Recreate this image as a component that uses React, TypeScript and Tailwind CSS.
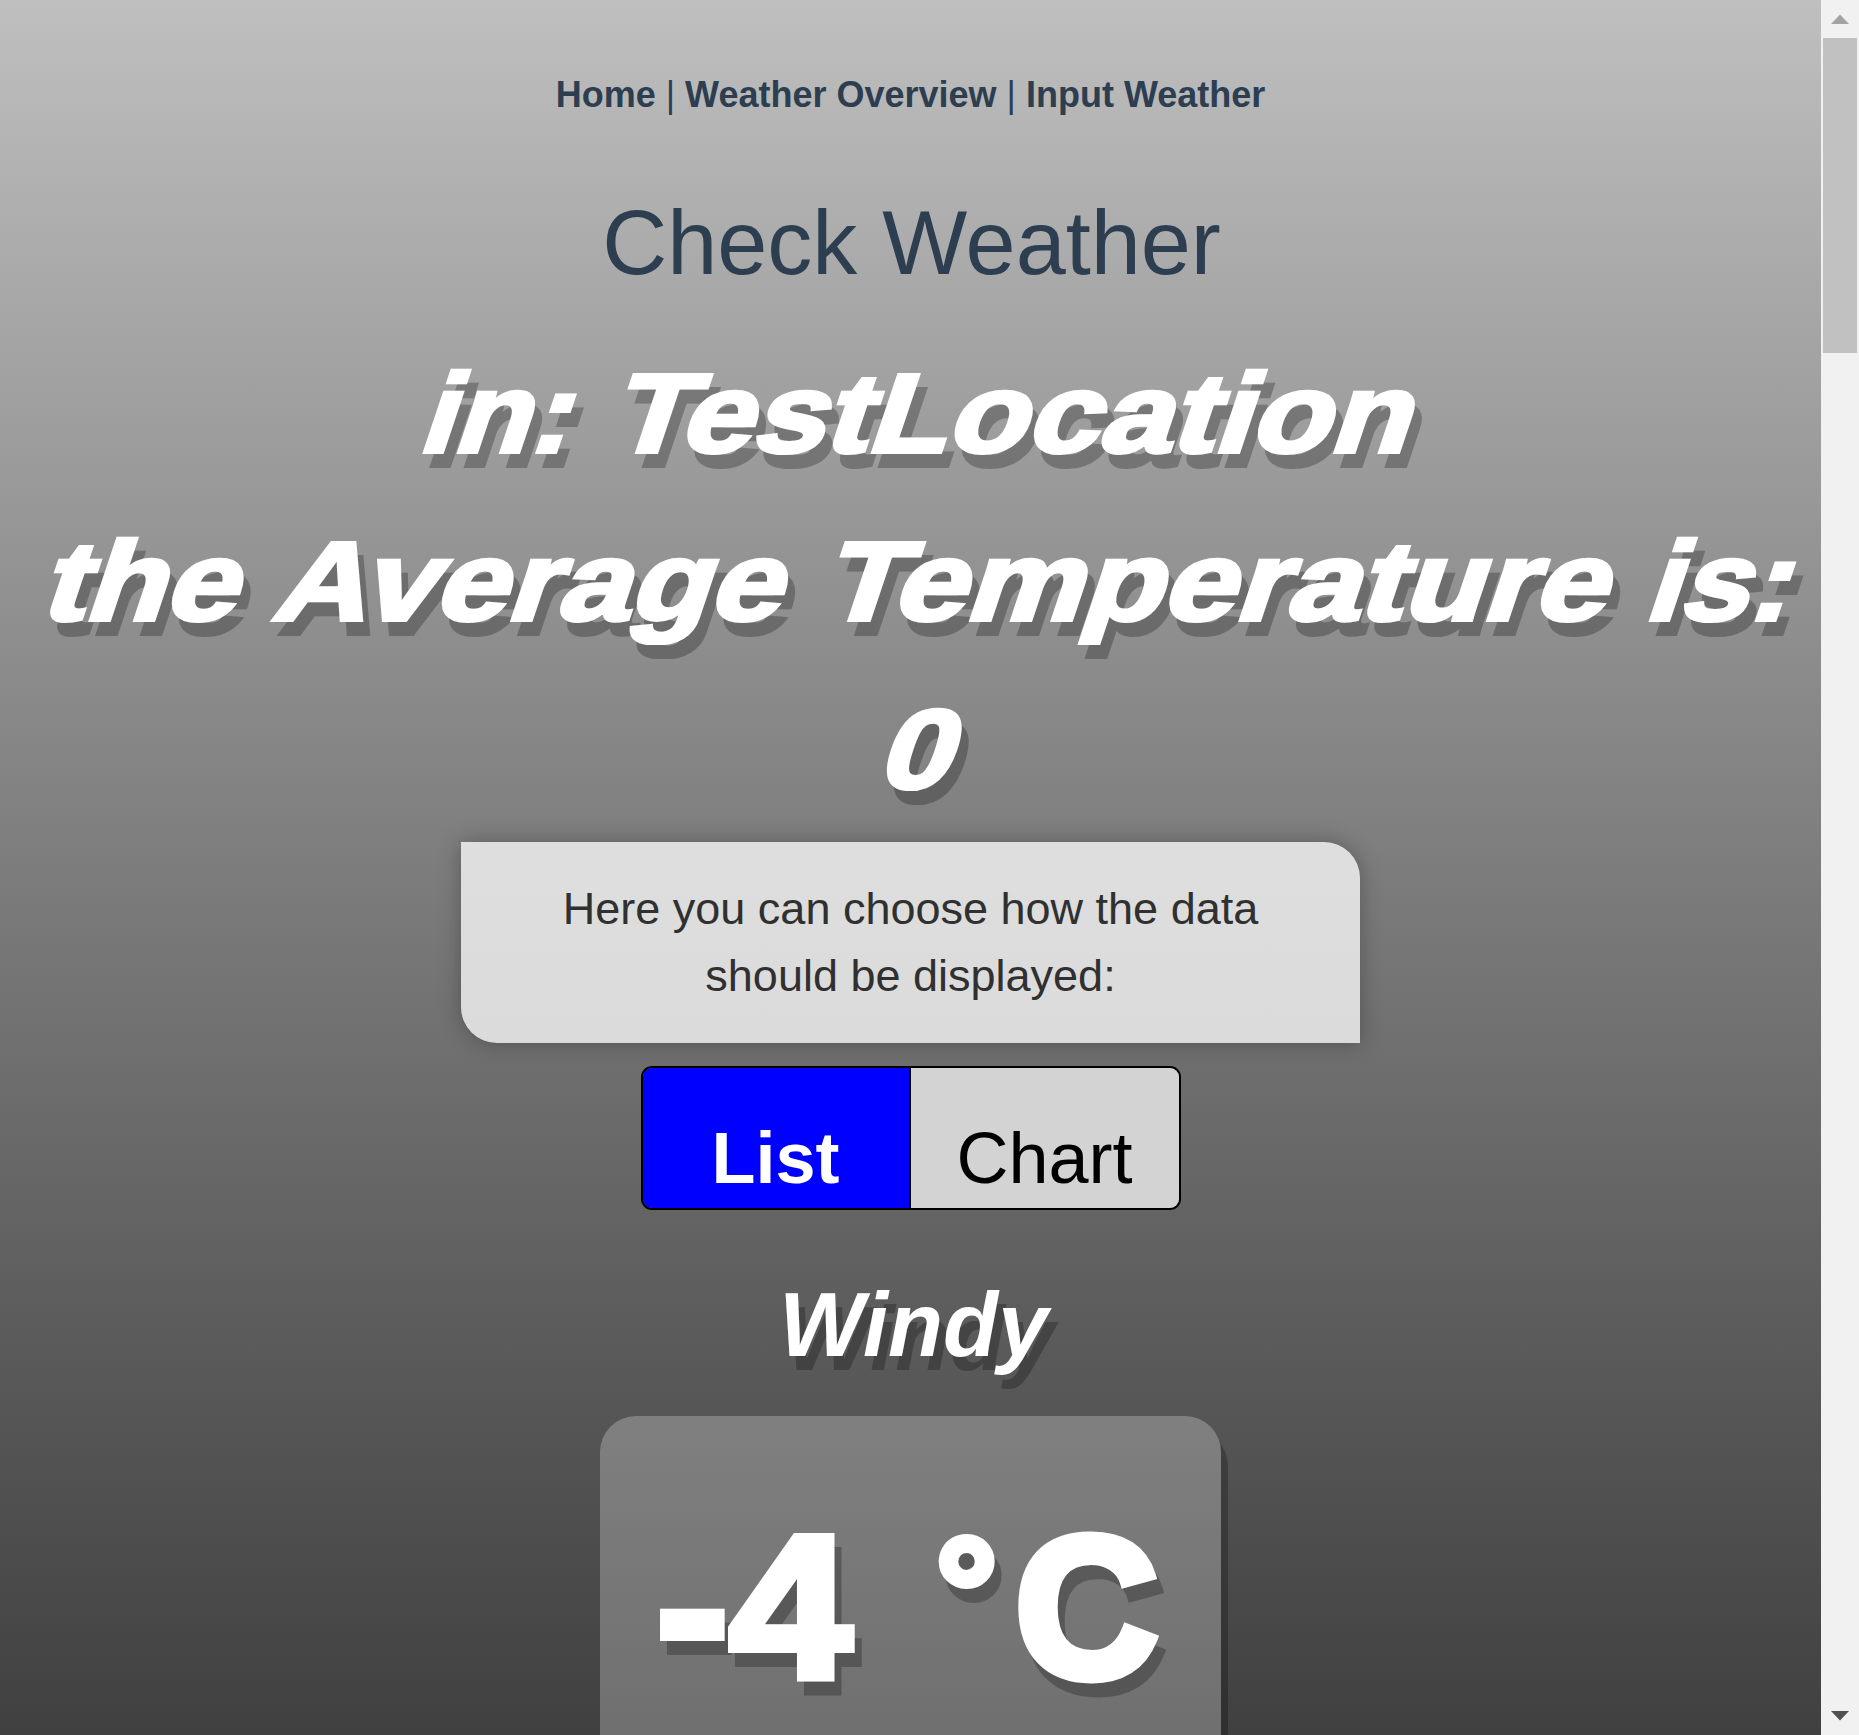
import type { ReactNode } from "react";

function HeavyWord({
  children,
  className,
  shape = "[transform:skewX(-18.5deg)_scaleX(1.16)]",
}: {
  children: ReactNode;
  className: string;
  shape?: string;
}) {
  return (
    <span className={`flex shrink-0 justify-center whitespace-nowrap ${className}`}>
      <span className={`block ${shape}`}>{children}</span>
    </span>
  );
}

function HeavyLine({ children, className }: { children: ReactNode; className: string }) {
  return (
    <div
      className={`flex h-[168px] text-[112px] leading-[168px] font-bold text-white [-webkit-text-stroke:4px_white] [filter:drop-shadow(7px_14px_0_rgba(0,0,0,0.25))] ${className}`}
    >
      {children}
    </div>
  );
}

function Scrollbar() {
  return (
    <div className="flex h-full w-[38px] shrink-0 flex-col items-center bg-[#f1f1f1]">
      <svg className="h-[38px] w-[38px] shrink-0" viewBox="0 0 38 38">
        <path d="M19 14.5 L28 24 H10 Z" fill="#a3a3a3" />
      </svg>
      <div className="h-[315px] w-[34px] bg-[#c1c1c1]" />
      <svg className="mt-auto h-[38px] w-[38px] shrink-0" viewBox="0 0 38 38">
        <path d="M10 14 H28 L19 23.5 Z" fill="#505050" />
      </svg>
    </div>
  );
}

export default function App() {
  return (
    <div className="flex h-[1735px] w-[1859px] overflow-hidden font-['Liberation_Sans',Arial,sans-serif]">
      <main className="flex h-full w-[1821px] flex-col items-center overflow-hidden bg-linear-to-b from-[#bfbfbf] to-[#404040] pt-[68px] text-[#2c3e50]">
        <nav className="h-[54px] shrink-0 text-[36px] leading-[54px] whitespace-nowrap">
          <a className="font-bold">Home</a> | <a className="font-bold">Weather Overview</a> |{" "}
          <a className="font-bold">Input Weather</a>
        </nav>
        <h1 className="mt-[54px] h-[135px] shrink-0 pl-[2px] text-[90px] leading-[135px] whitespace-nowrap">
          Check Weather
        </h1>
        <h2 className="mt-[19px] w-full shrink-0">
          <HeavyLine className="pl-[426px]">
            <HeavyWord className="w-[157px]" shape="[transform:skewX(-18.5deg)_scaleX(1.1)]">
              in:
            </HeavyWord>
            <HeavyWord className="ml-[41px] w-[791px]">TestLocation</HeavyWord>
          </HeavyLine>
          <HeavyLine className="pl-[50px]">
            <HeavyWord className="w-[197px]">the</HeavyWord>
            <HeavyWord className="ml-[34px] w-[512px]">Average</HeavyWord>
            <HeavyWord className="ml-[44px] w-[775px]" shape="[transform:skewX(-18.5deg)_scaleX(1.17)]">
              Temperature
            </HeavyWord>
            <HeavyWord className="ml-[41px] w-[148px]" shape="[transform:skewX(-18.5deg)_scaleX(1.1)]">
              is:
            </HeavyWord>
          </HeavyLine>
          <HeavyLine className="pl-[886px]">
            <HeavyWord className="w-[76px]">0</HeavyWord>
          </HeavyLine>
        </h2>
        <p className="mt-[8px] h-[201px] w-[899px] shrink-0 rounded-tr-[36px] rounded-bl-[36px] bg-white/75 px-[90px] py-[33px] text-center text-[45px] leading-[67px] text-[#303030] shadow-[0_0_22px_rgba(0,0,0,0.28)]">
          Here you can choose how the data should be displayed:
        </p>
        <div className="mt-[23px] flex h-[144px] w-[540px] shrink-0 overflow-hidden rounded-[11px] border-2 border-black text-center text-[72px] leading-[108px]">
          <button className="w-[266px] bg-[#0000ff] pt-[36px] font-bold text-white">List</button>
          <button className="flex-1 border-l-2 border-black bg-[#d3d3d3] pt-[36px] text-black">Chart</button>
        </div>
        <h3 className="mt-[48px] h-[135px] shrink-0 pl-[6px] text-[90px] leading-[135px] font-bold text-white italic [text-shadow:7px_14px_0_rgba(0,0,0,0.25)]">
          Windy
        </h3>
        <section className="mt-[23px] h-[500px] w-[621px] shrink-0 rounded-[36px] bg-white/25 pt-[38px] shadow-[7px_14px_0_rgba(0,0,0,0.25)]">
          <div className="flex pl-[56px] text-[204px] leading-[306px] font-bold text-white [-webkit-text-stroke:8px_white] [filter:drop-shadow(7px_14px_0_rgba(0,0,0,0.25))]">
            <HeavyWord className="w-[195px]" shape="scale-x-[1.08]">
              -4
            </HeavyWord>
            <HeavyWord className="ml-[87px] w-[57px] text-[153px] leading-[274px]" shape="">
              °
            </HeavyWord>
            <HeavyWord
              className="ml-[20px] w-[142px] text-[198px] leading-[308px] [-webkit-text-stroke:11px_white]"
              shape="scale-x-[0.99]"
            >
              C
            </HeavyWord>
          </div>
        </section>
      </main>
      <Scrollbar />
    </div>
  );
}
